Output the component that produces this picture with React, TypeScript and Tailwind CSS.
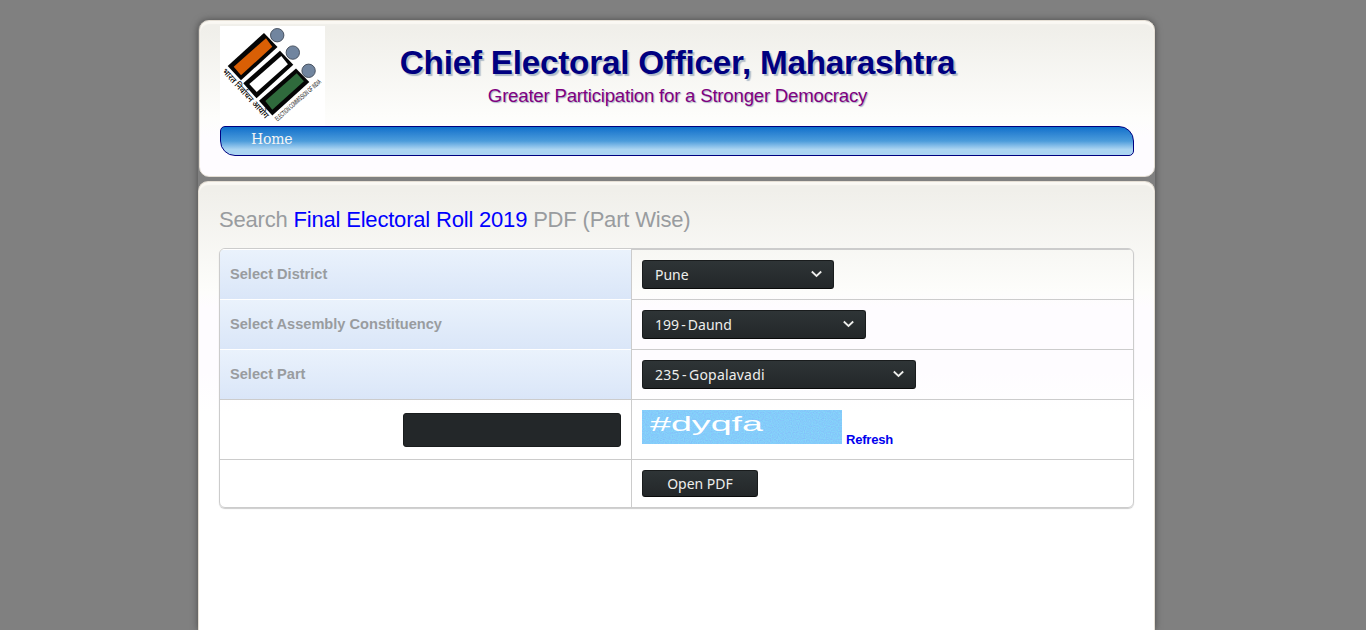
import type { ReactNode } from "react";

function Emblem() {
  return (
    <svg width="105" height="100" viewBox="0 0 105 100" className="block overflow-visible bg-white">
      <g stroke="#3f4a58" strokeWidth="0.9" fill="#71859f">
        <circle cx="57.2" cy="9.2" r="6.7" />
        <circle cx="72.8" cy="26.6" r="6.7" />
        <circle cx="88.6" cy="44.8" r="6.7" />
      </g>
      <g fill="#050505">
        <polygon points="44,7 57.5,21 21,54.3 7.7,40" />
        <polygon points="60,24.7 73.3,38.7 36.5,72.3 23.3,57.3" />
        <polygon points="76,42.5 89.3,56 52.3,89.5 39,74.7" />
      </g>
      <polygon points="46,12.3 52.3,20.7 21,49.3 13.7,40.7" fill="#d95f05" />
      <polygon points="61.3,30 67.9,38.3 36.7,66 29.3,58" fill="#fff" />
      <polygon points="76.7,47.3 83.9,55.3 52.3,83.7 45.3,75" fill="#2f6a3c" />
      <text transform="translate(1.8 45.8) rotate(47.5)" fontSize="8.5" fontFamily="'Noto Sans Devanagari','Noto Sans',sans-serif" fontWeight="500" textLength="64" lengthAdjust="spacingAndGlyphs" fill="#000">
        भारत निर्वाचन आयोग
      </text>
      <text transform="translate(57.4 95.6) rotate(-41.5)" fontSize="7" fontFamily="'Liberation Sans',sans-serif" textLength="59" lengthAdjust="spacingAndGlyphs" fill="#000">
        ELECTION COMMISSION OF INDIA
      </text>
    </svg>
  );
}

const dark =
  "rounded-[3px] border border-[#191c1d] border-b-[#090a0a] bg-linear-to-b from-[#2e3436] to-[#232729] font-['Noto_Sans','Open_Sans',sans-serif] text-[14px] text-[#eeeeec]";

function Select({ width, children }: { width: string; children: ReactNode }) {
  return (
    <button className={`flex h-[29px] items-center justify-between pr-[11px] pl-3 [word-spacing:-1.5px] ${width} ${dark}`}>
      {children}
      <svg width="11" height="8" viewBox="0 0 11 8" fill="none" stroke="#eeeeec" strokeWidth="1.8" className="-mt-0.5">
        <path d="M0.8 1.5 5.5 6 10.2 1.5" />
      </svg>
    </button>
  );
}

function Label({ children }: { children: ReactNode }) {
  return (
    <div className="flex h-[50px] items-center border-t border-white bg-linear-to-b from-[#eaf2fc] to-[#dae6f8] bg-clip-padding px-2.5 pb-px text-[14.6px] leading-[22px] font-bold text-[#999c9f]">
      {children}
    </div>
  );
}

const cell = "border-t border-l border-[#ccc] pl-2.5";

export default function App() {
  return (
    <div className="flex h-[630px] justify-center overflow-hidden bg-[#808080] pt-5 font-['Liberation_Sans',Arial,sans-serif]">
      <div className="-ml-[13px] flex w-[957px] flex-col rounded-t-[10px] bg-[#808080] shadow-[0_0_7px_#4a4a4a]">
        <header className="ml-px h-[157px] shrink-0 rounded-[10px] border border-[#e5dfd5] bg-linear-to-b from-[#f0efea] from-5% via-[#fdfdfb] via-62% to-[#fefcff] to-75% px-5 pt-[5px] shadow-[inset_0_3px_1px_#faf8f3]">
          <div className="grid h-[100px] grid-cols-[105px_1fr_105px]">
            <Emblem />
            <div className="pt-[18px] pl-px text-center whitespace-nowrap">
              <h1 className="text-[33.3px] leading-[38px] font-bold tracking-[-0.25px] text-[#000080] [text-shadow:2px_2px_1px_#b0bcc8]">
                Chief Electoral Officer, Maharashtra
              </h1>
              <p className="mt-[3px] text-[18.67px] leading-[22px] tracking-[-0.23px] text-[#800080] [text-shadow:1px_1px_1px_#a8b4c4]">
                Greater Participation for a Stronger Democracy
              </p>
            </div>
          </div>
          <nav className="h-[30px] rounded-tl-[5px] rounded-tr-[15px] rounded-br-[5px] rounded-bl-[15px] border border-[#000080] bg-linear-to-b from-[#0b70cb] via-[#4b9cdb] via-50% to-[#abd5f2] to-80% pl-[30px]">
            <a className="font-['DejaVu_Serif',serif] text-[14px] leading-6 tracking-[-0.2px] text-[#f5f5f5]">Home</a>
          </nav>
        </header>

        <main className="mt-1 flex-1 rounded-t-[10px] border border-b-0 border-[#e5dfd5] bg-[linear-gradient(to_bottom,#f0efea_8px,#fdfdfb_110px,#fefcff_125px,#fefcff_190px,#fff_230px)] px-5 shadow-[inset_0_3px_1px_#faf8f3]">
          <h2 className="pt-[25px] text-[22px] leading-[26px] tracking-[-0.19px] text-[#999c9f]">
            Search <span className="text-[#0000ff]">Final Electoral Roll 2019</span> PDF (Part Wise)
          </h2>
          <div className="mt-[15px] grid grid-cols-[411px_1fr] overflow-hidden rounded-[6px] border border-[#ccc] shadow-[0_1px_1px_#ccc]">
            <Label>Select District</Label>
            <div className={`${cell} pt-2.5`}>
              <Select width="w-[192px]">Pune</Select>
            </div>
            <Label>Select Assembly Constituency</Label>
            <div className={`${cell} pt-2.5`}>
              <Select width="w-[224px]">199 - Daund</Select>
            </div>
            <Label>Select Part</Label>
            <div className={`${cell} pt-2.5`}>
              <Select width="w-[274px]">
                <span className="tracking-[0.2px]">235 - Gopalavadi</span>
              </Select>
            </div>
            <div className="flex h-[60px] justify-end border-t border-[#ccc] pt-[13px] pr-2.5">
              <input className="h-[34px] w-[218px] rounded-[3px] border border-[#191c1d] bg-[#232729] text-white outline-none" />
            </div>
            <div className={`${cell} flex gap-1 pt-2.5`}>
              <svg width="200" height="34" className="block">
                <defs>
                  <filter id="grain" x="0" y="0" width="100%" height="100%" colorInterpolationFilters="sRGB">
                    <feTurbulence type="fractalNoise" baseFrequency="0.85" numOctaves="1" seed="4" />
                    <feColorMatrix values="0.08 0 0 0 0.48  0 0.18 0 0 0.71  0 0 0.04 0 0.96  0 0 0 0 1" />
                  </filter>
                </defs>
                <rect width="200" height="34" fill="#83ccfb" filter="url(#grain)" />
                <text x="8" y="21" fontSize="21" fontFamily="'Liberation Sans',sans-serif" textLength="113" lengthAdjust="spacingAndGlyphs" fill="#fff">
                  #dyqfa
                </text>
              </svg>
              <a className="pt-[22px] text-[13px] leading-4 font-bold tracking-[-0.2px] text-[#0000ee]">Refresh</a>
            </div>
            <div className="h-12 border-t border-[#ccc]" />
            <div className={`${cell} pt-2.5`}>
              <button className={`flex h-[27px] w-[116px] items-center justify-center ${dark}`}>Open PDF</button>
            </div>
          </div>
        </main>
      </div>
    </div>
  );
}
